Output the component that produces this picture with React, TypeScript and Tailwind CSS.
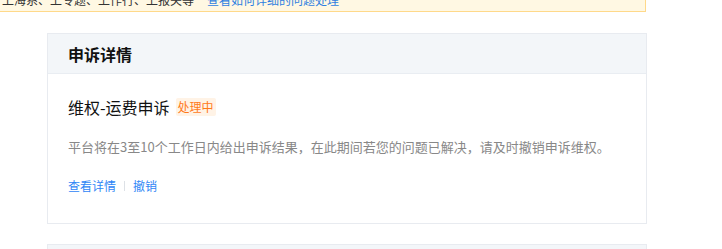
export default function App() {
  const font = { fontFamily: '"Noto Sans CJK SC", "Noto Sans", sans-serif' };
  return (
    <div className="w-[722px] h-[249px] overflow-hidden bg-white" style={font}>
      <div className="-mt-[28px] -ml-[20px] w-[666px] h-[40px] bg-[#fff8e3] border border-[#ffd98a] pl-[21px] pt-[17px] text-[12px] leading-[20px]">
        <div className="flex">
          <span className="text-[#333]">上海系、上专题、上作行、上报关等</span>
          <span className="ml-[13px] text-[#2f7fe0]">查看如何详细的问题处理</span>
        </div>
      </div>
      <div className="ml-[47px] mt-[21px] w-[600px] border border-[#e8ebf0] bg-white">
        <div className="h-[40px] bg-[#f3f6f9] border-b border-[#e9edf2] flex items-center px-[20px]">
          <span className="text-[16px] font-bold text-[#111]">申诉详情</span>
        </div>
        <div className="px-[20px] pt-[21px] pb-[27px]">
          <div className="flex items-center h-[24px]">
            <span className="text-[16px] text-[#111]">维权-运费申诉</span>
            <span className="ml-[6px] px-[2px] h-[18px] leading-[18px] text-[12px] text-[#ff7a1a] bg-[#fff3e6] rounded-[2px]">处理中</span>
          </div>
          <div className="mt-[18px] text-[13px] leading-[20px] text-[#888]">
            平台将在3至10个工作日内给出申诉结果，在此期间若您的问题已解决，请及时撤销申诉维权。
          </div>
          <div className="mt-[19px] flex items-center text-[12px] leading-[20px] text-[#2f86f6]">
            <span>查看详情</span>
            <span className="mx-[8px] w-px h-[10px] bg-[#dde1e6]"></span>
            <span>撤销</span>
          </div>
        </div>
      </div>
      <div className="ml-[47px] mt-[20px] w-[600px] h-[40px] border border-[#e8ebf0] bg-[#f3f6f9]"></div>
    </div>
  );
}
